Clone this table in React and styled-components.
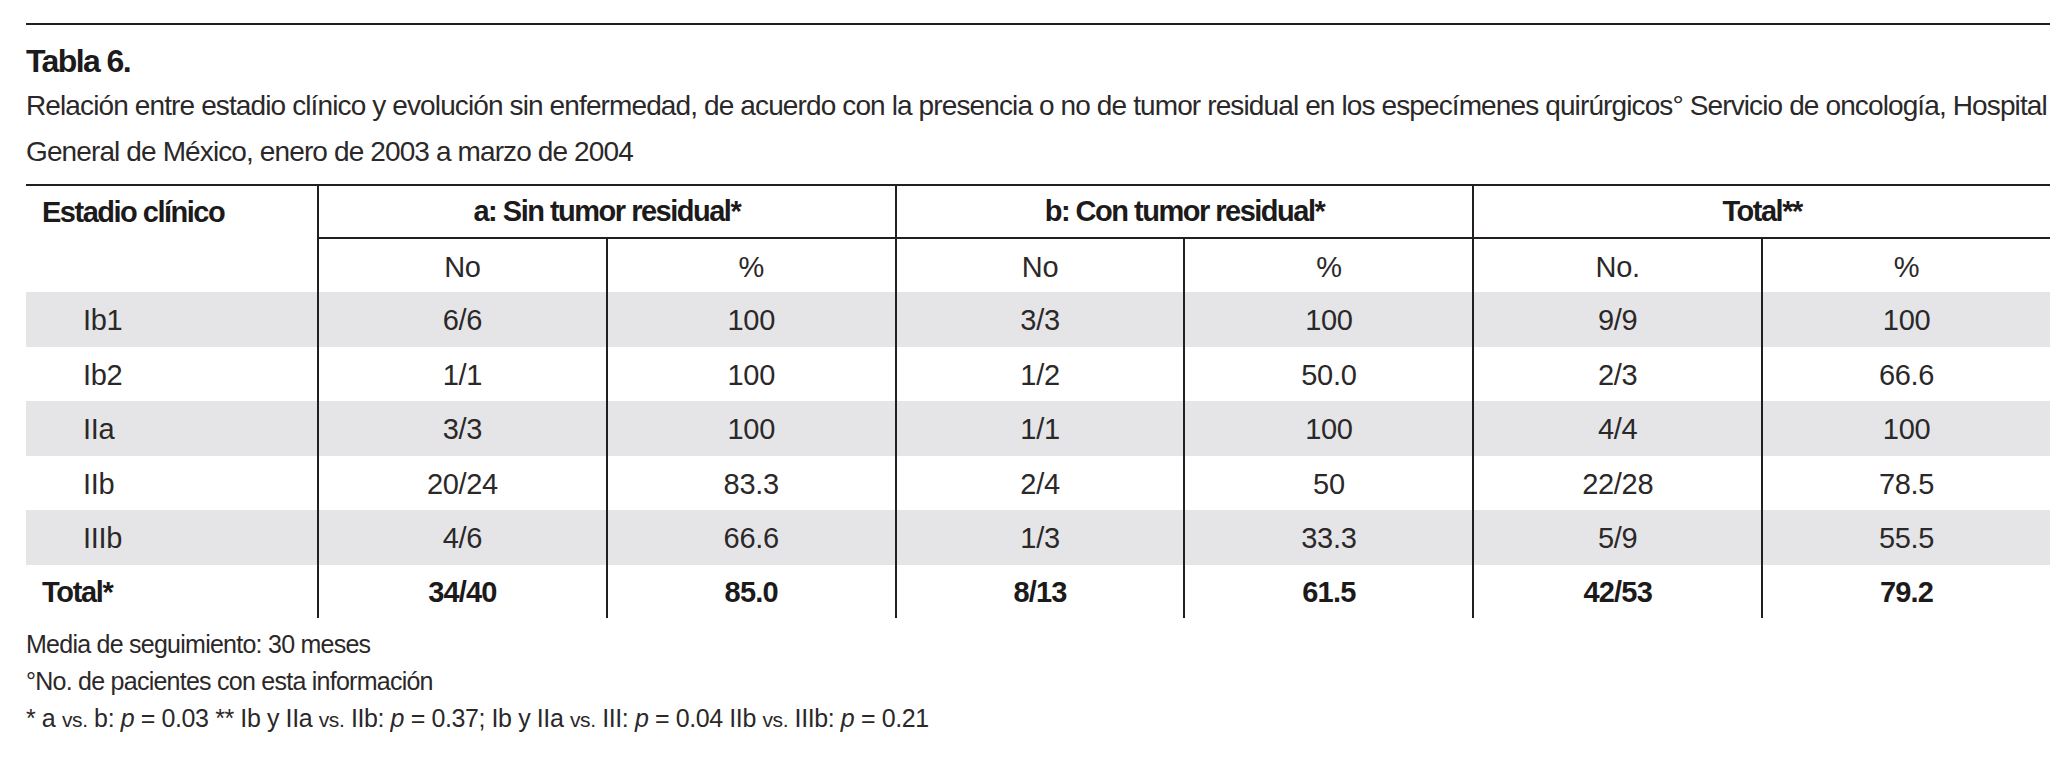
import styled, { createGlobalStyle } from 'styled-components'

const GlobalStyle = createGlobalStyle`
    body {
        margin: 0;
        background: #ffffff;
        font-family: "Liberation Sans Narrow", "Liberation Sans", Arial, sans-serif;
        color: #231f20;
    }
`

const Page = styled.div`
    width: 2024px;
    padding: 23px 20px 40px 26px;
`

const TopRule = styled.div`
    height: 2px;
    background: #231f20;
`

const Title = styled.div`
    margin-top: 16px;
    font-size: 32px;
    line-height: 40px;
    font-weight: 700;
    letter-spacing: -1.6px;
    color: #1c1a1b;
`

const Caption = styled.div`
    margin-top: 2px;
    font-size: 28px;
    line-height: 46px;
    letter-spacing: -0.88px;
    white-space: nowrap;
    color: #2b2829;
`

const Table = styled.table`
    margin-top: 9px;
    width: 2024px;
    table-layout: fixed;
    border-collapse: separate;
    border-spacing: 0;
`

const Row = styled.tr`
    height: ${(p) => p.$h || 54.5}px;
    background: ${(p) => (p.$shaded ? '#e5e5e7' : 'transparent')};
`

const HeadCell = styled.th`
    padding: 0;
    font-size: 29px;
    font-weight: 700;
    letter-spacing: -1.5px;
    color: #1c1a1b;
    text-align: ${(p) => (p.$left ? 'left' : 'center')};
    padding-left: ${(p) => (p.$left ? '16px' : '0')};
    border-top: 2px solid #231f20;
    border-left: ${(p) => (p.$divider ? '2px solid #231f20' : 'none')};
    border-bottom: ${(p) => (p.$underline ? '2px solid #231f20' : 'none')};
    vertical-align: middle;
`

const Cell = styled.td`
    padding: 3px 0 0;
    font-size: 29px;
    font-weight: ${(p) => (p.$bold ? 700 : 400)};
    letter-spacing: ${(p) => (p.$bold ? '-0.8px' : '-0.3px')};
    color: ${(p) => (p.$bold ? '#1c1a1b' : '#2b2829')};
    text-align: center;
    border-left: ${(p) => (p.$divider ? '2px solid #231f20' : 'none')};
    vertical-align: middle;
`

const LabelCell = styled.td`
    padding: 3px 0 0 ${(p) => (p.$bold ? '16px' : '57px')};
    font-size: 29px;
    font-weight: ${(p) => (p.$bold ? 700 : 400)};
    letter-spacing: ${(p) => (p.$bold ? '-1.3px' : '-0.3px')};
    color: ${(p) => (p.$bold ? '#1c1a1b' : '#2b2829')};
    text-align: left;
    vertical-align: middle;
`

const Notes = styled.div`
    margin-top: 8px;
    font-size: 25px;
    line-height: 37px;
    letter-spacing: -0.75px;
    color: #2b2829;
    white-space: nowrap;
`

const StatsLine = styled.div`
    letter-spacing: -0.4px;
`

const Small = styled.span`
    font-size: 21px;
`

const P = () => <i>p</i>

const groups = ['a: Sin tumor residual*', 'b: Con tumor residual*', 'Total**']
const subHeads = ['No', '%', 'No', '%', 'No.', '%']

const rows = [
    ['Ib1', '6/6', '100', '3/3', '100', '9/9', '100'],
    ['Ib2', '1/1', '100', '1/2', '50.0', '2/3', '66.6'],
    ['IIa', '3/3', '100', '1/1', '100', '4/4', '100'],
    ['IIb', '20/24', '83.3', '2/4', '50', '22/28', '78.5'],
    ['IIIb', '4/6', '66.6', '1/3', '33.3', '5/9', '55.5'],
]
const total = ['Total*', '34/40', '85.0', '8/13', '61.5', '42/53', '79.2']

const App = () => {
    return (
        <Page>
            <GlobalStyle />
            <TopRule />
            <Title>Tabla 6.</Title>
            <Caption>
                Relación entre estadio clínico y evolución sin enfermedad, de acuerdo con la presencia o no de tumor residual en los especímenes quirúrgicos° Servicio de oncología, Hospital
                <br />
                General de México, enero de 2003 a marzo de 2004
            </Caption>
            <Table>
                <colgroup>
                    <col style={{ width: 291 }} />
                    {subHeads.map((_, i) => <col key={i} />)}
                </colgroup>
                <thead>
                    <Row $h={55}>
                        <HeadCell $left>Estadio clínico</HeadCell>
                        {groups.map((g) => (
                            <HeadCell key={g} colSpan={2} $divider $underline>{g}</HeadCell>
                        ))}
                    </Row>
                    <Row $h={53}>
                        <LabelCell />
                        {subHeads.map((s, i) => (
                            <Cell key={i} $divider>{s}</Cell>
                        ))}
                    </Row>
                </thead>
                <tbody>
                    {rows.map((r, ri) => (
                        <Row key={r[0]} $shaded={ri % 2 === 0}>
                            <LabelCell>{r[0]}</LabelCell>
                            {r.slice(1).map((v, i) => (
                                <Cell key={i} $divider>{v}</Cell>
                            ))}
                        </Row>
                    ))}
                    <Row $h={53}>
                        <LabelCell $bold>{total[0]}</LabelCell>
                        {total.slice(1).map((v, i) => (
                            <Cell key={i} $divider $bold>{v}</Cell>
                        ))}
                    </Row>
                </tbody>
            </Table>
            <Notes>
                <div>Media de seguimiento: 30 meses</div>
                <div>°No. de pacientes con esta información</div>
                <StatsLine>
                    * a <Small>vs.</Small> b: <P /> = 0.03 ** Ib y IIa <Small>vs.</Small> IIb: <P /> = 0.37; Ib y IIa <Small>vs.</Small> III: <P /> = 0.04 IIb <Small>vs.</Small> IIIb: <P /> = 0.21
                </StatsLine>
            </Notes>
        </Page>
    )
}

export default App
